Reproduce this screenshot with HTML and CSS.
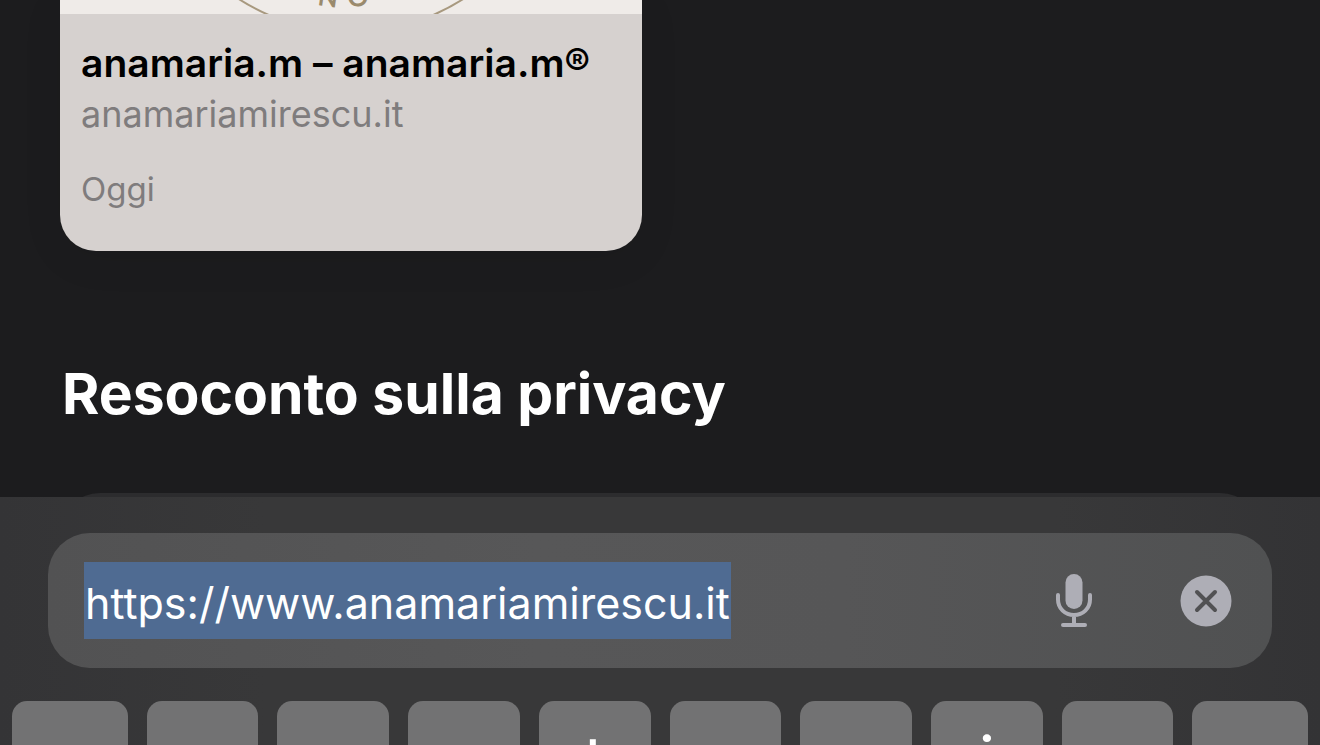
FILE: index.html
```html
<!DOCTYPE html>
<html lang="it">
<head>
<meta charset="utf-8">
<meta name="viewport" content="width=device-width, initial-scale=1">
<title>Pagina iniziale</title>
<link rel="stylesheet" href="styles.css">
</head>
<body>
<main class="start-page">
  <a class="site-card" href="#">
    <svg class="site-image" viewBox="0 0 582 14" aria-hidden="true">
      <circle cx="291" cy="-175" r="207" fill="none" stroke="#a8997f" stroke-width="2"/>
      <text class="logo-letter" x="257" y="5" transform="rotate(8 257 5)">N</text>
      <text class="logo-letter" x="288" y="7" transform="rotate(-4 288 7)">O</text>
    </svg>
    <span class="site-info">
      <span class="site-title">anamaria.m – anamaria.m®</span>
      <span class="site-domain">anamariamirescu.it</span>
      <span class="site-date">Oggi</span>
    </span>
  </a>
  <h1 class="section-title">Resoconto sulla privacy</h1>
  <div class="privacy-peek"><div class="privacy-card"></div></div>
</main>
<section class="input-panel">
  <form class="address-bar">
    <input class="address" type="text" aria-label="Indirizzo" value="https://www.anamariamirescu.it">
    <button class="icon-button" type="button" aria-label="Dettatura">
      <svg width="36" height="54" viewBox="0 0 36 54" fill="none" stroke="#aeaeb6" stroke-linecap="round">
        <rect x="9.500" y="0" width="17" height="35" rx="8.500" fill="#aeaeb6" stroke="none"/>
        <path d="M2 21v4.500c0 9 7 15.500 16 15.500s16-6.500 16-15.500V21M18 41v10" stroke-width="4"/>
        <path d="M7 51h22" stroke-width="4"/>
      </svg>
    </button>
    <button class="icon-button" type="button" aria-label="Cancella">
      <svg width="52" height="52" viewBox="0 0 52 52">
        <circle cx="26" cy="26" r="25.500" fill="#aeaeb6"/>
        <path d="M17 17l18 18M35 17L17 35" fill="none" stroke="#515153" stroke-width="4" stroke-linecap="round"/>
      </svg>
    </button>
  </form>
  <div class="keys">
    <button class="key" type="button">q</button>
    <button class="key" type="button">w</button>
    <button class="key" type="button">e</button>
    <button class="key" type="button">r</button>
    <button class="key" type="button">t</button>
    <button class="key" type="button">y</button>
    <button class="key" type="button">u</button>
    <button class="key" type="button">i</button>
    <button class="key" type="button">o</button>
    <button class="key" type="button">p</button>
  </div>
</section>
</body>
</html>
```

FILE: styles.css
```css
* {
  box-sizing: border-box;
}

body {
  margin: 0;
  min-height: 100vh;
  display: flex;
  flex-direction: column;
  background: #1c1c1e;
  color: #fff;
  font-family: Inter, "Liberation Sans", sans-serif;
}

.start-page {
  flex: 1;
  display: flex;
  flex-direction: column;
  align-items: flex-start;
  padding: 0 60px;
}

.site-card {
  display: flex;
  flex-direction: column;
  width: 582px;
  max-width: 100%;
  border-radius: 0 0 36px 36px;
  overflow: hidden;
  background: #d6d1cf;
  box-shadow: 0 8px 40px rgba(0, 0, 0, 0.08);
  text-decoration: none;
}

.site-image {
  display: block;
  width: 100%;
  background: #efebe8;
}

.logo-letter {
  font-family: Lato, "Liberation Sans", sans-serif;
  font-size: 26px;
  font-weight: 700;
  fill: #9a8a6c;
}

.site-info {
  display: flex;
  flex-direction: column;
  padding: 25px 21px 38px;
}

.site-title {
  color: #000;
  font-size: 39px;
  font-weight: 600;
  line-height: 48px;
  white-space: nowrap;
}

.site-domain {
  color: #7f7c7d;
  font-size: 36px;
  line-height: 54px;
}

.site-date {
  margin-top: 24px;
  color: #7f7c7d;
  font-size: 33px;
  line-height: 48px;
}

.section-title {
  margin: 105px 0 60px 2px;
  font-size: 57px;
  font-weight: 700;
  line-height: 76px;
}

.privacy-peek {
  align-self: stretch;
  height: 4px;
  margin-top: auto;
  overflow: hidden;
}

.privacy-card {
  height: 80px;
  border-radius: 40px;
  background: #2c2c2e;
}

.input-panel {
  display: flex;
  flex-direction: column;
  gap: 33px;
  padding-top: 36px;
  background: linear-gradient(90deg, #343436, #383839 20%, #383839 80%, #333335);
}

.address-bar {
  display: flex;
  align-items: center;
  gap: 88px;
  height: 135px;
  margin: 0 48px;
  padding: 0 40px 0 36px;
  border-radius: 42px;
  background: linear-gradient(90deg, #525253, #575758 40%, #565657 65%, #505152);
}

.address {
  flex: 0 1 auto;
  field-sizing: content;
  min-width: 0;
  height: 77px;
  margin-right: auto;
  padding: 4px 1px 0;
  border: 0;
  outline: 0;
  background: #4f6b92;
  color: #fff;
  font: 400 43px/72px Inter, "Liberation Sans", sans-serif;
}

.icon-button {
  display: flex;
  padding: 0;
  border: 0;
  background: none;
}

.keys {
  display: grid;
  grid-template-columns: 116fr repeat(8, 112fr) 116fr;
  gap: 19px;
  height: 44px;
  padding: 0 12px;
  overflow: hidden;
}

.key {
  height: 128px;
  padding: 0 0 8px;
  border: 0;
  border-radius: 15px;
  background: #727273;
  color: #fff;
  font: 400 67px/120px Inter, "Liberation Sans", sans-serif;
}
```
